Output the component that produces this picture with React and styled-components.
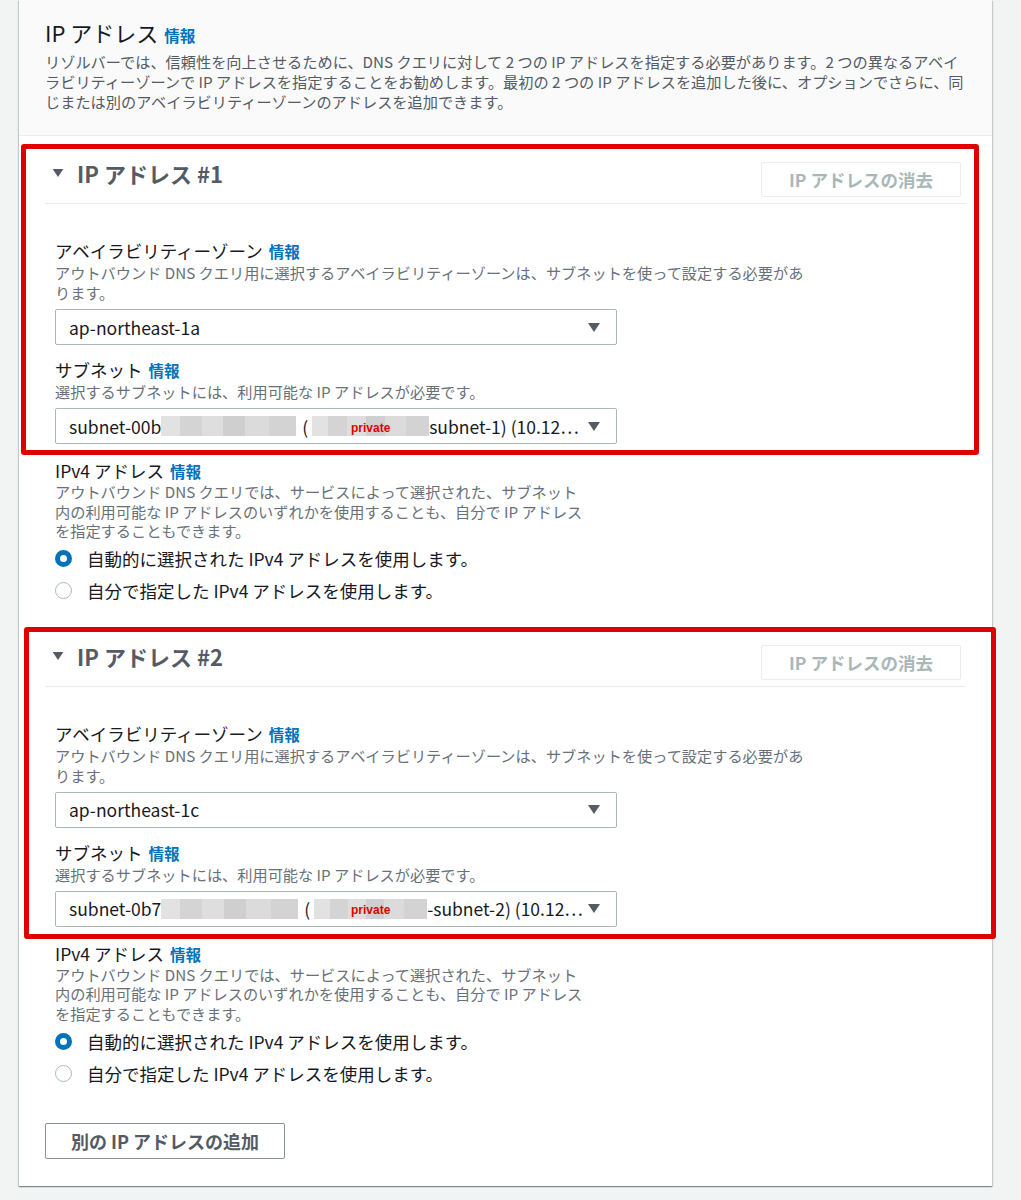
import React from 'react'
import styled, { createGlobalStyle } from 'styled-components'

const GlobalStyle = createGlobalStyle`
  body {
    margin: 0;
    background: #f2f3f3;
    font-family: "Noto Sans CJK JP", "Noto Sans", sans-serif;
    color: #16191f;
  }
`

const Page = styled.div`
  width: 1021px;
  box-sizing: border-box;
  padding: 0 29px 13px 19px;
`

const Card = styled.div`
  background: #fff;
  box-shadow: 0 1px 1px 0 rgba(0, 28, 36, 0.3), 1px 1px 1px 0 rgba(0, 28, 36, 0.15),
    -1px 1px 1px 0 rgba(0, 28, 36, 0.15);
`

const Header = styled.div`
  background: #fafafa;
  border-bottom: 1px solid #eaeded;
  padding: 18px 26px 24px;
`

const Title = styled.h2`
  margin: 0 0 5px;
  font-size: 22px;
  line-height: 28px;
  font-weight: 400;
  color: #16191f;
`

const Info = styled.a`
  font-size: ${p => p.$size || 15.5}px;
  line-height: 1;
  font-weight: 700;
  color: #0073bb;
  margin-left: 6px;
  text-decoration: none;
`

const HeaderDesc = styled.p`
  margin: 0;
  font-size: 15.2px;
  line-height: 20px;
  color: #545b64;
  white-space: nowrap;
`

const Body = styled.div`
  padding: 24px 26px 27px;
`

const Section = styled.section`
  margin-top: ${p => p.$gap || 0}px;
`

const Highlight = styled.div`
  position: relative;
  &::after {
    content: "";
    position: absolute;
    top: -16px;
    left: ${p => p.$left}px;
    right: ${p => p.$right}px;
    bottom: ${p => p.$bottom}px;
    border: 5px solid #e00000;
    border-radius: 3px;
    pointer-events: none;
  }
`

const SectionHead = styled.div`
  display: flex;
  justify-content: space-between;
  align-items: flex-start;
  padding-bottom: 6px;
  border-bottom: 1px solid #eaeded;
`

const Toggle = styled.div`
  display: flex;
  align-items: center;
  gap: 13px;
  margin-top: -2px;
  padding-left: 7px;
  font-size: 22px;
  line-height: 30px;
  font-weight: 700;
  color: #545b64;
`

const GhostButton = styled.button`
  margin: 2px 5px 0 0;
  width: 200px;
  height: 35px;
  background: #fff;
  border: 1px solid #eaeded;
  border-radius: 2px;
  font-family: inherit;
  font-size: 17.5px;
  font-weight: 700;
  color: #aab7b8;
`

const Content = styled.div`
  padding: ${p => p.$top ?? 36}px 0 0 10px;
`

const Field = styled.div`
  margin-top: ${p => (p.$first ? 0 : 14)}px;
`

const Label = styled.div`
  font-size: 17.5px;
  line-height: 22px;
  color: #16191f;
`

const Desc = styled.div`
  font-size: 15.2px;
  line-height: ${p => p.$lh || 20}px;
  color: #687078;
  white-space: nowrap;
`

const Select = styled.div`
  margin-top: 7px;
  width: 562px;
  height: 36px;
  box-sizing: border-box;
  border: 1px solid #aab7b8;
  border-radius: 2px;
  display: flex;
  align-items: center;
  justify-content: space-between;
  padding: 0 16px 0 13px;
  font-size: 17.5px;
  color: #16191f;
  white-space: nowrap;
`

const SelectText = styled.span`
  display: flex;
  align-items: center;
`

const Blur = styled.span`
  display: inline-flex;
  align-items: center;
  justify-content: center;
  width: ${p => p.$w}px;
  height: 20px;
  margin: 0 ${p => p.$mr || 0}px 0 ${p => p.$ml || 0}px;
  background: linear-gradient(90deg, #e2e2e2 0 14%, #d4d4d4 14% 30%, #dedede 30% 46%, #cfcfcf 46% 62%, #dbdbdb 62% 80%, #d3d3d3 80% 100%);
  color: #e00000;
  font-size: 12px;
  font-weight: 700;
  font-family: "Liberation Sans", sans-serif;
  padding-top: 3px;
  box-sizing: border-box;
`

const Radios = styled.div`
  margin-top: 2px;
`

const RadioRow = styled.label`
  display: flex;
  align-items: center;
  gap: 15px;
  height: 32px;
  font-size: 17.5px;
  color: #16191f;
`

const RadioDot = styled.span`
  width: 17px;
  height: 17px;
  box-sizing: border-box;
  border-radius: 50%;
  flex: none;
  ${p =>
    p.$on
      ? `background: #fff; border: 5px solid #0073bb;`
      : `background: #fff; border: 1px solid #aab7b8;`}
`

const AddButton = styled.button`
  margin-top: 34px;
  width: 240px;
  height: 36px;
  background: #fff;
  border: 1px solid #879596;
  border-radius: 2px;
  font-family: inherit;
  font-size: 18px;
  font-weight: 700;
  color: #545b64;
`

const Caret = ({ w = 12, h = 9 }) => (
  <svg width={w} height={h} viewBox="0 0 12 9">
    <path d="M0 0h12L6 9z" fill="#545b64" />
  </svg>
)

const sections = [
  {
    n: 1,
    az: 'ap-northeast-1a',
    subnet: ['subnet-00b', 135, ' (', 117, 'subnet-1) (10.12…'],
    box: { left: -24, right: -13, bottom: -11 },
    gap: 0,
  },
  {
    n: 2,
    az: 'ap-northeast-1c',
    subnet: ['subnet-0b7', 137, ' (', 113, '-subnet-2) (10.12…'],
    box: { left: -21, right: -30, bottom: -12 },
    gap: 36,
  },
]

function IpSection({ s }) {
  const [a, w1, b, w2, c] = s.subnet
  return (
    <Section $gap={s.gap}>
      <Highlight $left={s.box.left} $right={s.box.right} $bottom={s.box.bottom}>
        <SectionHead>
          <Toggle>
            <Caret w={12} h={8} />
            IP アドレス #{s.n}
          </Toggle>
          <GhostButton disabled>IP アドレスの消去</GhostButton>
        </SectionHead>
        <Content>
          <Field $first>
            <Label>
              アベイラビリティーゾーン<Info>情報</Info>
            </Label>
            <Desc>
              アウトバウンド DNS クエリ用に選択するアベイラビリティーゾーンは、サブネットを使って設定する必要があ
              <br />
              ります。
            </Desc>
            <Select>
              <SelectText>{s.az}</SelectText>
              <Caret />
            </Select>
          </Field>
          <Field>
            <Label>
              サブネット<Info>情報</Info>
            </Label>
            <Desc>選択するサブネットには、利用可能な IP アドレスが必要です。</Desc>
            <Select>
              <SelectText>
                {a}
                <Blur $w={w1} $mr={6} />
                {b}
                <Blur $w={w2} $ml={4}>private</Blur>
                {c}
              </SelectText>
              <Caret />
            </Select>
          </Field>
        </Content>
      </Highlight>
      <Content $top={16}>
        <Label>
          IPv4 アドレス<Info>情報</Info>
        </Label>
        <Desc $lh={19.5}>
          アウトバウンド DNS クエリでは、サービスによって選択された、サブネット
          <br />
          内の利用可能な IP アドレスのいずれかを使用することも、自分で IP アドレス
          <br />
          を指定することもできます。
        </Desc>
        <Radios>
          <RadioRow>
            <RadioDot $on />
            自動的に選択された IPv4 アドレスを使用します。
          </RadioRow>
          <RadioRow>
            <RadioDot />
            自分で指定した IPv4 アドレスを使用します。
          </RadioRow>
        </Radios>
      </Content>
    </Section>
  )
}

export default function App() {
  return (
    <>
      <GlobalStyle />
      <Page>
        <Card>
          <Header>
            <Title>
              IP アドレス<Info>情報</Info>
            </Title>
            <HeaderDesc>
              リゾルバーでは、信頼性を向上させるために、DNS クエリに対して 2 つの IP アドレスを指定する必要があります。2 つの異なるアベイ
              <br />
              ラビリティーゾーンで IP アドレスを指定することをお勧めします。最初の 2 つの IP アドレスを追加した後に、オプションでさらに、同
              <br />
              じまたは別のアベイラビリティーゾーンのアドレスを追加できます。
            </HeaderDesc>
          </Header>
          <Body>
            {sections.map(s => (
              <IpSection key={s.n} s={s} />
            ))}
            <AddButton>別の IP アドレスの追加</AddButton>
          </Body>
        </Card>
      </Page>
    </>
  )
}
